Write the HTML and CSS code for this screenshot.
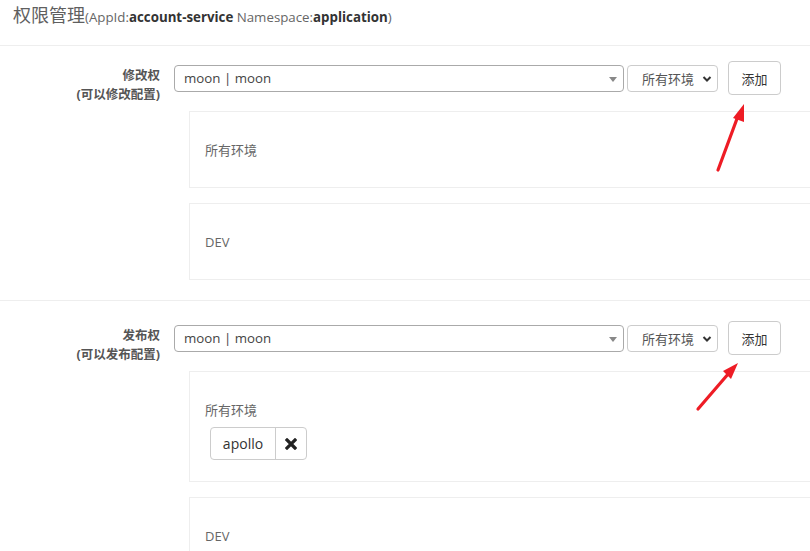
FILE: index.html
```html
<!DOCTYPE html>
<html>
<head>
<meta charset="utf-8">
<link rel="stylesheet" href="styles.css">
</head>
<body>
<div class="page">
  <header class="head">
    <span class="title">权限管理</span><span class="sub">(AppId:<b>account-service</b> Namespace:<b>application</b>)</span>
  </header>

  <section class="perm perm-first">
    <div class="row">
      <div class="label">修改权<br>(可以修改配置)</div>
      <div class="controls">
        <div class="select user"><span>moon | moon</span><i class="tri"></i></div>
        <div class="select env"><span>所有环境</span><svg class="chev" width="10" height="8" viewBox="0 0 10 8"><path d="M1.5 2 L5 5.5 L8.5 2" fill="none" stroke="#333" stroke-width="2"/></svg></div>
        <button class="btn">添加</button>
      </div>
    </div>
    <div class="boxes">
      <div class="box"><div class="env-name">所有环境</div></div>
      <div class="box"><div class="env-name">DEV</div></div>
    </div>
  </section>

  <section class="perm">
    <div class="row">
      <div class="label">发布权<br>(可以发布配置)</div>
      <div class="controls">
        <div class="select user"><span>moon | moon</span><i class="tri"></i></div>
        <div class="select env"><span>所有环境</span><svg class="chev" width="10" height="8" viewBox="0 0 10 8"><path d="M1.5 2 L5 5.5 L8.5 2" fill="none" stroke="#333" stroke-width="2"/></svg></div>
        <button class="btn">添加</button>
      </div>
    </div>
    <div class="boxes">
      <div class="box box-tags">
        <div class="env-name">所有环境</div>
        <div class="tag"><span class="tag-name">apollo</span><span class="tag-x"><svg width="12" height="12" viewBox="0 0 12 12"><path d="M2 2 L10 10 M10 2 L2 10" stroke="#222" stroke-width="3.2" stroke-linecap="square"/></svg></span></div>
      </div>
      <div class="box"><div class="env-name">DEV</div></div>
    </div>
  </section>

  <svg class="arrows" width="810" height="551" viewBox="0 0 810 551">
    <line x1="718" y1="170" x2="738" y2="116" stroke="#ee1c25" stroke-width="3.2" stroke-linecap="round"/>
    <polygon points="744,104 733,118 744,122" fill="#ee1c25"/>
    <line x1="698" y1="409" x2="729" y2="373" stroke="#ee1c25" stroke-width="3.2" stroke-linecap="round"/>
    <polygon points="738,363 723,371 731,379" fill="#ee1c25"/>
  </svg>
</div>
</body>
</html>
```

FILE: styles.css
```css
html, body {
  margin: 0;
  padding: 0;
  background: #fff;
  overflow: hidden;
}
.page {
  position: relative;
  width: 810px;
  height: 551px;
  overflow: hidden;
  font-family: "Open Sans", "Noto Sans CJK SC", sans-serif;
  color: #333;
}
.head {
  height: 46px;
  padding-left: 13px;
  box-sizing: border-box;
  padding-top: 2px;
  border-bottom: 1px solid #eee;
  white-space: nowrap;
}
.title {
  font-size: 18px;
  color: #5f5f5f;
  line-height: 26px;
}
.sub {
  font-size: 13.3px;
  color: #666;
}
.sub b {
  color: #333;
  font-weight: 700;
}
.perm {
  padding-top: 20px;
  padding-bottom: 20px;
  border-bottom: 1px solid #eee;
}
.perm-first {
  padding-top: 15px;
}
.row {
  display: flex;
  align-items: flex-start;
  height: 34px;
}
.label {
  width: 160px;
  flex: none;
  text-align: right;
  font-size: 12.5px;
  font-weight: 700;
  color: #555;
  line-height: 19px;
  padding-top: 5px;
}
.controls {
  display: flex;
  align-items: center;
  margin-left: 14px;
}
.select {
  height: 27px;
  box-sizing: border-box;
  border: 1px solid #aaa;
  border-radius: 4px;
  display: flex;
  align-items: center;
  position: relative;
  background: #fff;
}
.user {
  width: 450px;
  padding-left: 9px;
  font-size: 13.3px;
  color: #444;
}
.tri {
  position: absolute;
  right: 6px;
  top: 11px;
  border-left: 4px solid transparent;
  border-right: 4px solid transparent;
  border-top: 5px solid #888;
}
.env {
  width: 91px;
  margin-left: 3px;
  padding-left: 14px;
  font-size: 13px;
  color: #555;
  border-color: #ccc;
}
.chev {
  position: absolute;
  right: 5px;
  top: 9px;
}
.btn {
  margin-left: 10px;
  width: 53px;
  height: 34px;
  border: 1px solid #ccc;
  border-radius: 4px;
  background: #fff;
  font-family: "Open Sans", "Noto Sans CJK SC", sans-serif;
  font-size: 13px;
  color: #333;
  padding: 0;
}
.boxes {
  margin-left: 189px;
  margin-top: 16px;
  display: flex;
  flex-direction: column;
  gap: 15px;
}
.box {
  width: 700px;
  height: 77px;
  box-sizing: border-box;
  border: 1px solid #eee;
  padding: 29px 15px 0;
}
.env-name {
  font-size: 13px;
  color: #666;
  line-height: 18px;
}
.box-tags {
  height: 111px;
}
.tag {
  display: inline-flex;
  margin-left: 5px;
  margin-top: 8px;
  height: 33px;
  border: 1px solid #ccc;
  border-radius: 4px;
  box-sizing: border-box;
  font-size: 14px;
  color: #333;
}
.tag-name {
  width: 64px;
  display: flex;
  align-items: center;
  justify-content: center;
  border-right: 1px solid #ccc;
}
.tag-x {
  width: 30px;
  display: flex;
  align-items: center;
  justify-content: center;
}
.arrows {
  position: absolute;
  left: 0;
  top: 0;
  pointer-events: none;
}
```
